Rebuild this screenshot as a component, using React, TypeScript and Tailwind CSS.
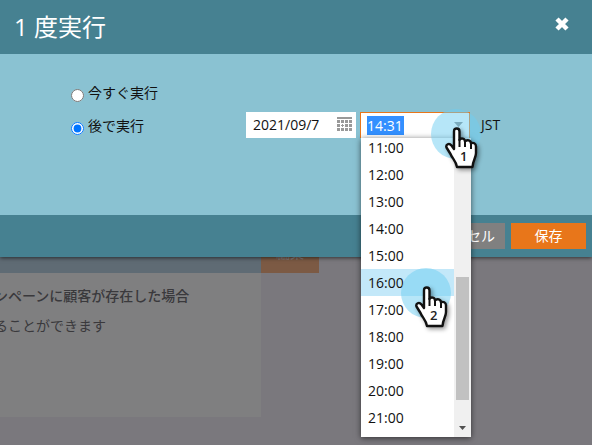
import type { ReactNode } from "react";

const times = ["11:00", "12:00", "13:00", "14:00", "15:00", "16:00", "17:00", "18:00", "19:00", "20:00", "21:00"];

function CalendarIcon() {
  const cells: ReactNode[] = [];
  for (let row = 0; row < 3; row++) {
    for (let col = 0; col < 4; col++) {
      if (row === 1 && col === 1) {
        cells.push(<path key="plus" d="M5 7h1v1h1v1h-1v1h-1v-1h-1v-1h1z" />);
      } else {
        cells.push(<rect key={`${row}-${col}`} x={col * 4} y={3 + row * 4} width="3" height="3" />);
      }
    }
  }
  return (
    <svg className="mb-0.5" width="15" height="14" viewBox="0 0 15 14" fill="#999999" shapeRendering="crispEdges" aria-hidden="true">
      <rect width="15" height="2" />
      {cells}
    </svg>
  );
}

function Pointer({ step }: { step: string }) {
  return (
    <div className="pointer-events-none relative size-[50px] rounded-full bg-[#6dcdf2]/50">
      <svg className="absolute top-[17px] left-[12px] overflow-visible drop-shadow-[2px_2px_2px_rgba(0,0,0,0.4)]" width="34" height="44" viewBox="0 0 34 44" aria-hidden="true">
        <path
          d="M11 23V5.500C11 1.500 16.500 1.500 16.500 5.500V14C18 11.500 22 12.500 22 15.500C24 13 28 14.500 28 17.500C30 16 33 17.500 33 20.500V27C33 32 30 34 29.500 41H14C13 35 9 32 7.500 28L3.500 21.500C2.500 18.500 6 16.500 8.500 19.500Z"
          fill="#fff"
          stroke="#111"
          strokeWidth="2.400"
          strokeLinejoin="round"
        />
        <path d="M16.500 13V21M22 15V21M28 18V23" stroke="#111" strokeWidth="2" />
      </svg>
      <span className="absolute top-[39px] left-[29px] text-[13px] leading-4 font-semibold text-[#222]">{step}</span>
    </div>
  );
}

function Page() {
  return (
    <main className="min-h-screen bg-[#7a787d] text-sm text-[#3a393c]">
      <div className="flex h-[273px] items-end">
        <div className="h-9 w-[261px] bg-[#5f6b74]" />
        <button type="button" className="h-9 w-[58px] bg-[#7c5a44] pb-1 text-[#8a8284]">編集</button>
      </div>
      <section className="h-36 w-[261px] bg-[#7f7f80] pt-2">
        <h2 className="-ml-1.5 leading-[30px] font-medium whitespace-nowrap">ンペーンに顧客が存在した場合</h2>
        <p className="-ml-1.5 leading-[30px] whitespace-nowrap">ることができます</p>
      </section>
    </main>
  );
}

function TimePicker() {
  return (
    <div className="relative ml-1 w-[110px]">
      <div className="flex h-[26px] items-center border border-b-0 border-[#e8761a] bg-white px-[6px]">
        <input aria-label="時刻" readOnly value="14:31" className="h-[19px] w-[37px] bg-[#3390ff] text-sm text-white outline-none" />
        <svg className="mb-0.5 ml-auto" width="9" height="5" viewBox="0 0 9 5" aria-hidden="true">
          <path d="M0 0H9L4.500 5Z" fill="#888" />
        </svg>
      </div>
      <div className="absolute top-[26px] left-px z-10 flex h-[299px] w-[110px] bg-white shadow-[0_1px_6px_rgba(0,0,0,0.6)]">
        <ul role="listbox" aria-label="時刻の候補" className="flex flex-1 flex-col justify-end overflow-hidden pb-[6px]">
          {times.map((t) => (
            <li
              key={t}
              role="option"
              aria-selected={t === "16:00"}
              className={`h-[27px] shrink-0 pl-[7px] leading-[27px] ${t === "16:00" ? "bg-[#c3e8f9]" : ""}`}
            >
              {t}
            </li>
          ))}
        </ul>
        <div className="flex w-[17px] flex-col items-center justify-end bg-[#f0f0f0] pb-[6px]">
          <div className="mb-[26px] h-[123px] w-[13px] bg-[#c1c1c1]" />
          <svg width="7" height="5" viewBox="0 0 7 5" aria-hidden="true">
            <path d="M0 0H7L3.500 4Z" fill="#505050" />
          </svg>
        </div>
      </div>
      <div className="absolute top-[-3px] left-[71px] z-20">
        <Pointer step="1" />
      </div>
      <div className="absolute top-[156px] left-[41px] z-20">
        <Pointer step="2" />
      </div>
    </div>
  );
}

function RunDialog() {
  return (
    <div role="dialog" aria-labelledby="dialog-title" className="absolute inset-x-0 top-0 bg-[#8ac2d2] text-sm text-[#111] shadow-[0_1px_4px_rgba(0,0,0,0.6)]">
      <header className="flex h-[54px] items-center justify-between bg-[#468191] pr-[22px] pl-[14px] text-white">
        <h1 id="dialog-title" className="text-2xl leading-9">1 度実行</h1>
        <button type="button" aria-label="閉じる" className="mb-1.5">
          <svg width="16" height="16" viewBox="0 0 16 16" aria-hidden="true">
            <path d="M3 3L13 13M13 3L3 13" stroke="#fff" strokeWidth="4.500" />
          </svg>
        </button>
      </header>
      <div className="flex h-[161px] items-start">
        <fieldset className="ml-[71px] w-[175px] pt-[22px]">
          <label className="flex h-[33px] items-center gap-1">
            <input type="radio" name="run" className="mt-1.5 size-[13px] accent-[#0075ff]" />
            今すぐ実行
          </label>
          <label className="flex h-[33px] items-center gap-1">
            <input type="radio" name="run" defaultChecked className="mt-1.5 size-[13px] accent-[#0075ff]" />
            後で実行
          </label>
        </fieldset>
        <div className="flex items-center pt-[58px]">
          <div className="flex h-[26px] w-[110px] items-center justify-between bg-white pr-1 pl-[7px]">
            <input aria-label="日付" defaultValue="2021/09/7" className="w-[76px] text-sm outline-none" />
            <CalendarIcon />
          </div>
          <TimePicker />
          <span className="ml-[11px]">JST</span>
        </div>
      </div>
      <footer className="flex h-[42px] items-center justify-end gap-[6px] bg-[#468191] pr-[6px] text-white">
        <button type="button" className="h-[26px] bg-[#808080] px-[10px]">キャンセル</button>
        <button type="button" className="h-[26px] w-[75px] bg-[#e8761a]">保存</button>
      </footer>
    </div>
  );
}

export default function App() {
  return (
    <div className="relative min-h-screen overflow-hidden font-['Open_Sans','Noto_Sans_CJK_JP',sans-serif]">
      <Page />
      <RunDialog />
    </div>
  );
}
